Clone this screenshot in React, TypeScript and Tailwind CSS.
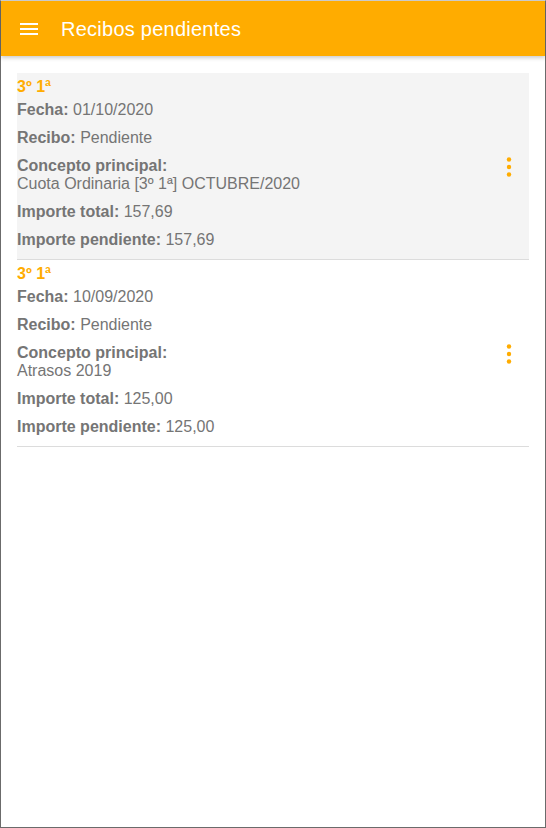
import React from "react";

type Recibo = {
  title: string;
  fecha: string;
  recibo: string;
  concepto: string;
  total: string;
  pendiente: string;
  highlighted?: boolean;
};

const data: Recibo[] = [
  {
    title: "3º 1ª",
    fecha: "01/10/2020",
    recibo: "Pendiente",
    concepto: "Cuota Ordinaria [3º 1ª] OCTUBRE/2020",
    total: "157,69",
    pendiente: "157,69",
    highlighted: true,
  },
  {
    title: "3º 1ª",
    fecha: "10/09/2020",
    recibo: "Pendiente",
    concepto: "Atrasos 2019",
    total: "125,00",
    pendiente: "125,00",
  },
];

function MoreVert() {
  return (
    <svg width="10" height="24" viewBox="0 0 10 24" fill="#ffac00">
      <circle cx="5" cy="4.5" r="2.2" />
      <circle cx="5" cy="12" r="2.2" />
      <circle cx="5" cy="19.5" r="2.2" />
    </svg>
  );
}

function Card({ r }: { r: Recibo }) {
  return (
    <div
      className={`relative flex items-center border-b border-[#dcdcdc] pt-[5px] pb-[10px] ${
        r.highlighted ? "bg-[#f4f4f4]" : "bg-white"
      }`}
    >
      <div className="flex-1 text-[16px] leading-[18px] text-[#757575]">
        <div className="font-bold text-[#ffac00]">{r.title}</div>
        <div className="mt-[5px]">
          <span className="font-bold">Fecha:</span> {r.fecha}
        </div>
        <div className="mt-[10px]">
          <span className="font-bold">Recibo:</span> {r.recibo}
        </div>
        <div className="mt-[10px]">
          <div className="font-bold">Concepto principal:</div>
          <div>{r.concepto}</div>
        </div>
        <div className="mt-[10px]">
          <span className="font-bold">Importe total:</span> {r.total}
        </div>
        <div className="mt-[10px]">
          <span className="font-bold">Importe pendiente:</span> {r.pendiente}
        </div>
      </div>
      <div className="mr-[15px] mt-[6px] flex items-center">
        <MoreVert />
      </div>
    </div>
  );
}

export default function App() {
  return (
    <div
      className="box-border flex h-[828px] w-[546px] flex-col border-t border-l border-r border-b border-t-[#cfcfcf] border-l-[#6b6b6b] border-r-[#6b6b6b] border-b-[#6b6b6b] bg-white"
      style={{ fontFamily: '"Liberation Sans", Arial, sans-serif' }}
    >
      <header className="relative z-10 flex h-[55px] shrink-0 items-center bg-[#ffac00] shadow-[0_2px_4px_rgba(0,0,0,0.2)]">
        <svg
          className="ml-4"
          width="24"
          height="24"
          viewBox="0 0 24 24"
          fill="#ffffff"
        >
          <path d="M3 18h18v-2H3v2zm0-5h18v-2H3v2zm0-7v2h18V6H3z" />
        </svg>
        <h1 className="ml-5 text-[20px] font-normal tracking-[0.25px] text-white">
          Recibos pendientes
        </h1>
      </header>
      <main className="px-4 pt-[17px]">
        {data.map((r, i) => (
          <Card key={i} r={r} />
        ))}
      </main>
    </div>
  );
}
